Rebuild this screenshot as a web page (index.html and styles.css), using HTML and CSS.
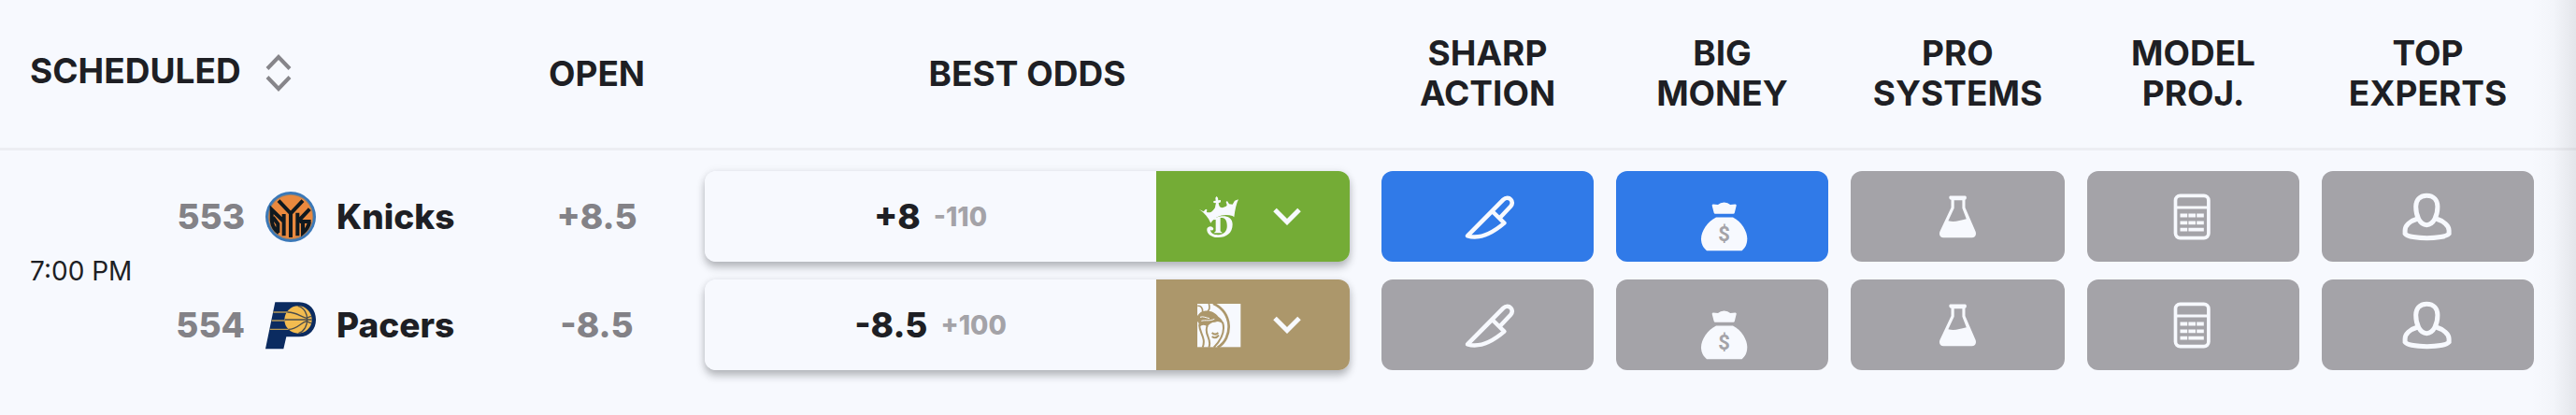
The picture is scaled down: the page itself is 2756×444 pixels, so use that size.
FILE: index.html
```html
<!DOCTYPE html>
<html lang="en">
<head>
  <meta charset="UTF-8">
  <meta name="viewport" content="width=device-width, initial-scale=1.0">
  <title>NBA Odds</title>
  <link rel="stylesheet" href="styles.css">
</head>
<body>
  <!-- shared icons -->
  <svg class="sprite" aria-hidden="true">
    <symbol id="icon-chevron" viewBox="0 0 30 19">
      <path d="M2 2.500L15 15.500L28 2.500" fill="none" stroke="currentColor" stroke-width="5"/>
    </symbol>
    <symbol id="icon-knife" viewBox="0 0 54 54" overflow="visible">
      <path d="M5 47.3L43.3 8.6C46 5.9 49.5 6.2 51.2 8.3C53.3 10.6 53.2 13.4 51 16L40.2 27.5M31.5 21L44.4 33.6C34 42.5 19 51.5 5 47.3Z" fill="none" stroke="currentColor" stroke-width="4.500" stroke-linejoin="round"/>
    </symbol>
    <symbol id="icon-money" viewBox="0 0 54 54" overflow="visible">
      <path d="M16.8 13.6L22 14Q24.5 11.5 28.6 11.5T35.2 14L40.6 13.6Q42 13.7 41.7 15L39.8 22.8Q39.5 23.8 38.5 23.8H19Q18 23.8 17.7 22.8L15.7 15Q15.5 13.7 16.8 13.6Z" fill="currentColor"/>
      <path d="M20 27.5H38C47 32 53.3 42 53.3 50.5C53.3 56 51 60.5 47.6 63.2H10C6.5 60.5 4 56 4 50.5C4 42 11 32 20 27.5Z" fill="currentColor"/>
      <text class="dollar" x="28.6" y="53" text-anchor="middle">$</text>
    </symbol>
    <symbol id="icon-flask" viewBox="0 0 54 54">
      <path fill="currentColor" fill-rule="evenodd" d="M18.5 4.5H34.5C36.4 4.5 36.4 8.5 34.5 8.8V17L45.500 42.500C47 46 45 49.200 42 49.200H11C8 49.200 6 46 7.500 42.500L19.500 17V8.800C16.800 8.500 16.800 4.500 18.500 4.500ZM22.700 9.300V17.800L16.400 31.300C23 33.300 28 31 35.800 29.300L31.400 17.800V9.300Z"/>
    </symbol>
    <symbol id="icon-calc" viewBox="0 0 54 54">
      <rect x="7.5" y="4.4" width="35.4" height="45.2" rx="5" fill="none" stroke="currentColor" stroke-width="3.7"/>
      <path fill="currentColor" d="M8 15.5H43V18.5H8ZM12.5 23.5H20.2V27.5H12.5ZM21.4 23.5H29V27.5H21.4ZM30.2 23.5H37.8V27.5H30.2ZM12.5 31.5H20.2V35.2H12.5ZM21.4 31.5H29V35.2H21.4ZM30.2 31.5H37.8V35.2H30.2ZM12.5 38.8H20.2V42.5H12.5ZM21.4 38.8H37.8V42.5H21.4Z"/>
    </symbol>
    <symbol id="icon-expert" viewBox="0 0 54 54" overflow="visible">
      <path fill="none" stroke="currentColor" stroke-width="5" d="M25.2 4.2C17.5 4.2 13.7 9.5 13.7 16C13.7 25 17.5 35.7 25.2 35.7S36.9 25 36.9 16C36.9 9.5 33 4.2 25.2 4.2ZM15.5 29C7 31.5 2.1 36.5 2.1 41.5V45C7 51.2 44 51.2 49.1 45V41.5C49.1 36.5 43.5 31.5 35.5 29"/>
    </symbol>
  </svg>

  <main class="odds">
    <table class="odds-table">
      <colgroup>
        <col class="col-game">
        <col class="col-open">
        <col class="col-best">
        <col class="col-signal">
        <col class="col-signal">
        <col class="col-systems">
        <col class="col-signal">
        <col class="col-signal">
        <col class="col-edge">
      </colgroup>
      <thead>
        <tr>
          <th class="game-head" scope="col">
            <button class="sort" type="button">
              <span>SCHEDULED</span>
              <svg width="28" height="40" viewBox="0 0 28 40" aria-hidden="true">
                <path d="M2 15.500L14 3L26 15.500M2 24.500L14 37L26 24.500" fill="none" stroke="currentColor" stroke-width="4"/>
              </svg>
            </button>
          </th>
          <th scope="col">OPEN</th>
          <th scope="col">BEST ODDS</th>
          <th scope="col">SHARP<br>ACTION</th>
          <th scope="col">BIG<br>MONEY</th>
          <th scope="col">PRO<br>SYSTEMS</th>
          <th scope="col">MODEL<br>PROJ.</th>
          <th scope="col">TOP<br>EXPERTS</th>
          <td></td>
        </tr>
      </thead>
      <tbody>
        <tr>
          <td>
            <div class="game">
              <time class="game-time" datetime="19:00">7:00 PM</time>
              <div class="stack">
                <div class="team">
                  <span class="team-number">553</span>
                  <svg class="team-logo" viewBox="0 0 162 162" role="img" aria-label="Knicks logo">
                    <circle cx="81" cy="81" r="81" fill="#3a78b8"/>
                    <circle cx="81" cy="81" r="73" fill="#8a8177"/>
                    <circle cx="81" cy="81" r="70" fill="#ea893e"/>
                    <g fill="none" stroke="#10191f" stroke-width="12">
                      <path d="M42 29L81 70L120 29M81 68V147"/>
                      <path d="M43 132C31 124 22 110 20 92V58L59 96M59 142V72M24 82L40 104V132"/>
                      <path d="M103 142V68M142 56L104 96M110 96H146M120 98V132C130 124 138 114 141 98"/>
                    </g>
                  </svg>
                  <span>Knicks</span>
                </div>
                <div class="team">
                  <span class="team-number">554</span>
                  <svg class="team-logo" viewBox="0 -6 162 162" role="img" aria-label="Pacers logo">
                    <path d="M31 1H108C142 1 162 26 162 57C162 88 142 112 108 112H67L58 151H0Z" fill="#0b2b60"/>
                    <circle cx="105" cy="57" r="44" fill="#f3bc50"/>
                    <g fill="none" stroke-width="4">
                      <path d="M25 33H70M20 60H64M14 88H74" stroke="#b99a55"/>
                      <path d="M70 33C100 32 112 48 132 52M62 57H149M74 88C104 88 112 66 132 62M104 13C126 18 134 40 134 57S126 94 106 101M148 47C140 46 136 50 132 53M148 68C140 68 136 64 132 61" stroke="#4a4c4c"/>
                    </g>
                  </svg>
                  <span>Pacers</span>
                </div>
              </div>
            </div>
          </td>
          <td>
            <div class="stack">
              <span class="open-line">+8.5</span>
              <span class="open-line">-8.5</span>
            </div>
          </td>
          <td class="best-cell">
            <div class="stack">
              <div class="best">
                <button class="best-odds" type="button"><span>+8</span><span class="juice">-110</span></button>
                <button class="book book-dk" type="button" aria-label="DraftKings">
                  <svg class="book-logo" viewBox="0 0 144 144" aria-hidden="true">
                    <path fill="currentColor" d="M9 48L23 55L30 47L34 49L33 57C42 60 50 56 54 50C58 46 61 42 61 35L63 28L55 27L55 21L62 20L61 11L65 6L69 11L70 19L78 18V25L71 28L73 36C76 43 82 43 86 42C94 40 98 37 98 34L95 24L99 21L105 31L116 32L123 20L135 16C128 30 124 48 121 73L116 69C90 61 60 68 46 92C38 73 26 60 9 48Z"/>
                    <path fill="currentColor" d="M50 82C66 66 116 60 116 96C116 126 94 139 68 138C46 138 32 124 34 110C37 100 53 100 55 110C54 116 48 116 45 114C46 128 62 131 76 129C94 126 100 112 98 96C97 79 88 74 77 75V118L84 124H56L62 118V81Z"/>
                  </svg>
                  <svg class="chevron" width="30" height="19" aria-hidden="true"><use href="#icon-chevron"/></svg>
                </button>
              </div>
              <div class="best">
                <button class="best-odds" type="button"><span>-8.5</span><span class="juice">+100</span></button>
                <button class="book book-mgm" type="button" aria-label="BetMGM">
                  <svg class="book-logo" viewBox="0 0 144 144" aria-hidden="true">
                    <rect x="3" y="3" width="139" height="139" fill="currentColor"/>
                    <path fill="#ac976b" d="M3 42C9 32 16 27 26 26C42 24 60 30 70 44C80 50 86 58 86 68C76 60 68 58 60 62C48 62 40 68 35 78C30 70 18 68 10 78C8 66 6 60 3 60Z"/>
                    <path fill="none" stroke="currentColor" stroke-width="3" d="M12 46C22 42 30 48 42 50M16 58C30 54 40 60 58 52"/>
                    <g fill="none" stroke="#ac976b" stroke-width="5">
                      <path stroke-width="8" d="M54 2C118 30 118 114 68 143"/>
                      <path d="M40 3C44 14 42 22 36 28M4 10C14 8 21 16 20 30"/>
                      <path d="M9 70C10 98 32 112 20 143M35 74C22 100 52 116 40 143M84 62C92 86 82 116 56 143" stroke-width="6"/>
                      <path d="M50 96C58 104 64 102 70 96M50 108C58 114 66 112 72 104" stroke-width="6"/>
                    </g>
                  </svg>
                  <svg class="chevron" width="30" height="19" aria-hidden="true"><use href="#icon-chevron"/></svg>
                </button>
              </div>
            </div>
          </td>
          <td class="signal-cell">
            <div class="stack">
              <button class="signal active" type="button" aria-label="Sharp action"><svg><use href="#icon-knife"/></svg></button>
              <button class="signal" type="button" aria-label="Sharp action"><svg><use href="#icon-knife"/></svg></button>
            </div>
          </td>
          <td class="signal-cell">
            <div class="stack">
              <button class="signal active" type="button" aria-label="Big money"><svg><use href="#icon-money"/></svg></button>
              <button class="signal" type="button" aria-label="Big money"><svg><use href="#icon-money"/></svg></button>
            </div>
          </td>
          <td class="signal-cell">
            <div class="stack">
              <button class="signal" type="button" aria-label="Pro systems"><svg><use href="#icon-flask"/></svg></button>
              <button class="signal" type="button" aria-label="Pro systems"><svg><use href="#icon-flask"/></svg></button>
            </div>
          </td>
          <td class="signal-cell">
            <div class="stack">
              <button class="signal" type="button" aria-label="Model projection"><svg><use href="#icon-calc"/></svg></button>
              <button class="signal" type="button" aria-label="Model projection"><svg><use href="#icon-calc"/></svg></button>
            </div>
          </td>
          <td class="signal-cell">
            <div class="stack">
              <button class="signal" type="button" aria-label="Top experts"><svg><use href="#icon-expert"/></svg></button>
              <button class="signal" type="button" aria-label="Top experts"><svg><use href="#icon-expert"/></svg></button>
            </div>
          </td>
          <td></td>
        </tr>
      </tbody>
    </table>
  </main>
</body>
</html>
```

FILE: styles.css
```css
* {
  box-sizing: border-box;
}
body {
  margin: 0;
  background: #f7f9fe;
  color: #1e1f24;
  font-family: Inter, "Liberation Sans", sans-serif;
  font-size: 37px;
  font-weight: 700;
}
button {
  border: none;
  padding: 0;
  background: none;
  color: inherit;
  font: inherit;
  cursor: pointer;
}
.sprite {
  display: none;
}
.odds {
  position: relative;
  padding-bottom: 26px;
}
.odds::after {
  content: "";
  position: absolute;
  top: 0;
  right: 0;
  bottom: 0;
  width: 48px;
  background: linear-gradient(to right, rgba(30, 31, 36, 0), rgba(30, 31, 36, 0.02) 50%, rgba(30, 31, 36, 0.09));
  pointer-events: none;
}
.odds-table {
  width: 100%;
  table-layout: fixed;
  border-collapse: separate;
  border-spacing: 0;
}
.col-game {
  width: 545px;
}
.col-open {
  width: 187px;
}
.col-signal {
  width: 251px;
}
.col-systems {
  width: 253px;
}
.col-edge {
  width: 33px;
}
.odds-table th,
.odds-table td {
  padding: 0;
}
.odds-table thead th,
.odds-table thead td {
  height: 161px;
  padding-bottom: 2px;
  border-bottom: 3px solid #edeef3;
  line-height: 43px;
  text-align: center;
  vertical-align: middle;
}
.odds-table tbody td {
  padding: 22px 0;
}
.odds-table thead .game-head {
  padding-left: 32px;
  text-align: left;
}
.sort {
  display: flex;
  align-items: center;
  gap: 26px;
}
.sort span {
  padding-bottom: 6px;
}
.sort svg {
  color: #86858a;
}
.stack {
  display: grid;
  grid-auto-rows: 97px;
  gap: 19px;
}
.game {
  display: flex;
  align-items: center;
  padding-left: 32px;
}
.game-time {
  width: 154px;
  font-size: 28px;
  font-weight: 400;
}
.team {
  display: flex;
  align-items: center;
  gap: 22px;
  font-weight: 800;
}
.team-number {
  width: 76px;
  color: #838287;
  text-align: right;
}
.team-logo {
  width: 54px;
  height: 54px;
}
.open-line {
  display: flex;
  align-items: center;
  justify-content: center;
  color: #838287;
  font-weight: 800;
}
.odds-table tbody .best-cell {
  padding-left: 22px;
  padding-right: 22px;
}
.best {
  display: flex;
  border-radius: 12px;
  box-shadow: 0 6px 8px rgba(30, 31, 36, 0.28), 0 0 8px rgba(30, 31, 36, 0.08);
}
.best-odds {
  flex: 1;
  display: flex;
  align-items: center;
  justify-content: center;
  gap: 14px;
  border-radius: 12px 0 0 12px;
  background: #f7f9fe;
  font-weight: 800;
}
.juice {
  color: #a4a3a8;
  font-size: 28px;
}
.book {
  display: flex;
  align-items: center;
  gap: 34px;
  width: 207px;
  padding-left: 43px;
  border-radius: 0 12px 12px 0;
  color: #f7f9fe;
}
.book-dk {
  background: #74ac36;
}
.book-mgm {
  background: #ac976b;
}
.book-logo {
  width: 48px;
  height: 48px;
}
.odds-table tbody .signal-cell {
  padding-left: 12px;
  padding-right: 12px;
}
.signal {
  display: flex;
  align-items: center;
  justify-content: center;
  border-radius: 12px;
  background: #a4a3a8;
  color: #f7f9fe;
}
.signal svg {
  width: 54px;
  height: 54px;
  overflow: visible;
}
.signal.active {
  background: #307ae8;
}
.dollar {
  fill: #a4a3a8;
  font-family: Roboto, sans-serif;
  font-size: 22px;
  font-weight: 700;
}
.signal.active .dollar {
  fill: #307ae8;
}
```
